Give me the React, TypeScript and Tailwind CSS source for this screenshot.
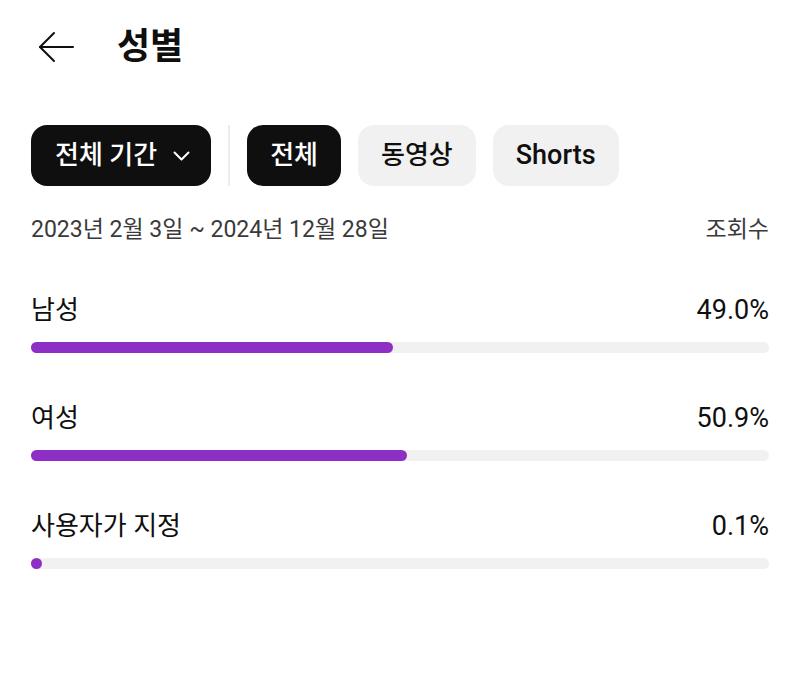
const rows = [
  { label: "남성", value: "49.0%", pct: 49.0 },
  { label: "여성", value: "50.9%", pct: 50.9 },
  { label: "사용자가 지정", value: "0.1%", pct: 0.1 },
];

const App = () => {
  return (
    <div
      className="min-h-screen bg-white text-[#0f0f0f] px-[31px]"
      style={{ fontFamily: '"Roboto", "Noto Sans CJK KR", sans-serif' }}
    >
      {/* Header */}
      <header className="h-[94px] flex items-center">
        <svg
          width="36"
          height="32"
          viewBox="0 0 36 32"
          fill="none"
          stroke="#0f0f0f"
          strokeWidth="2"
          strokeLinecap="round"
          strokeLinejoin="round"
          className="ml-[7px]"
        >
          <path d="M35 16H2" />
          <path d="M16 2L2 16L16 30" />
        </svg>
        <h1 className="ml-[43px] text-[36px] font-bold leading-none">성별</h1>
      </header>

      {/* Filter chips */}
      <div className="mt-[31px] flex items-center gap-[17px]">
        <button className="h-[61px] pl-6 pr-[21px] rounded-[16px] bg-[#0f0f0f] text-white text-[26px] font-medium flex items-center gap-[16px]">
          전체 기간
          <svg
            width="17"
            height="10"
            viewBox="0 0 17 10"
            fill="none"
            stroke="white"
            strokeWidth="2"
            strokeLinecap="round"
            strokeLinejoin="round"
          >
            <path d="M1.5 1.5L8.5 8.5L15.5 1.5" />
          </svg>
        </button>
        <div className="w-[2px] h-[61px] bg-[#ececec]" />
        <button className="h-[61px] px-[23px] rounded-[16px] bg-[#0f0f0f] text-white text-[26px] font-medium">
          전체
        </button>
        <button className="h-[61px] px-[23px] rounded-[16px] bg-[#f1f1f1] text-[#0f0f0f] text-[26px] font-medium">
          동영상
        </button>
        <button className="h-[61px] px-[23px] rounded-[16px] bg-[#f1f1f1] text-[#0f0f0f] text-[27px] font-medium">
          Shorts
        </button>
      </div>

      {/* Date range */}
      <div className="mt-[29px] h-[30px] flex items-center justify-between text-[23px] text-[#3a3a3a]">
        <span>2023년 2월 3일 ~ 2024년 12월 28일</span>
        <span>조회수</span>
      </div>

      {/* Rows */}
      <div className="mt-[48px] flex flex-col gap-[48px]">
        {rows.map((row) => (
          <div key={row.label}>
            <div className="h-[34px] flex items-center justify-between">
              <span className="text-[26px]">{row.label}</span>
              <span className="text-[27px]">{row.value}</span>
            </div>
            <div className="mt-[15px] h-[11px] rounded-full bg-[#f1f1f1]">
              <div
                className="h-full rounded-full bg-[#8d2fc4] min-w-[11px]"
                style={{ width: `${row.pct}%` }}
              />
            </div>
          </div>
        ))}
      </div>
    </div>
  );
};

export default App;
